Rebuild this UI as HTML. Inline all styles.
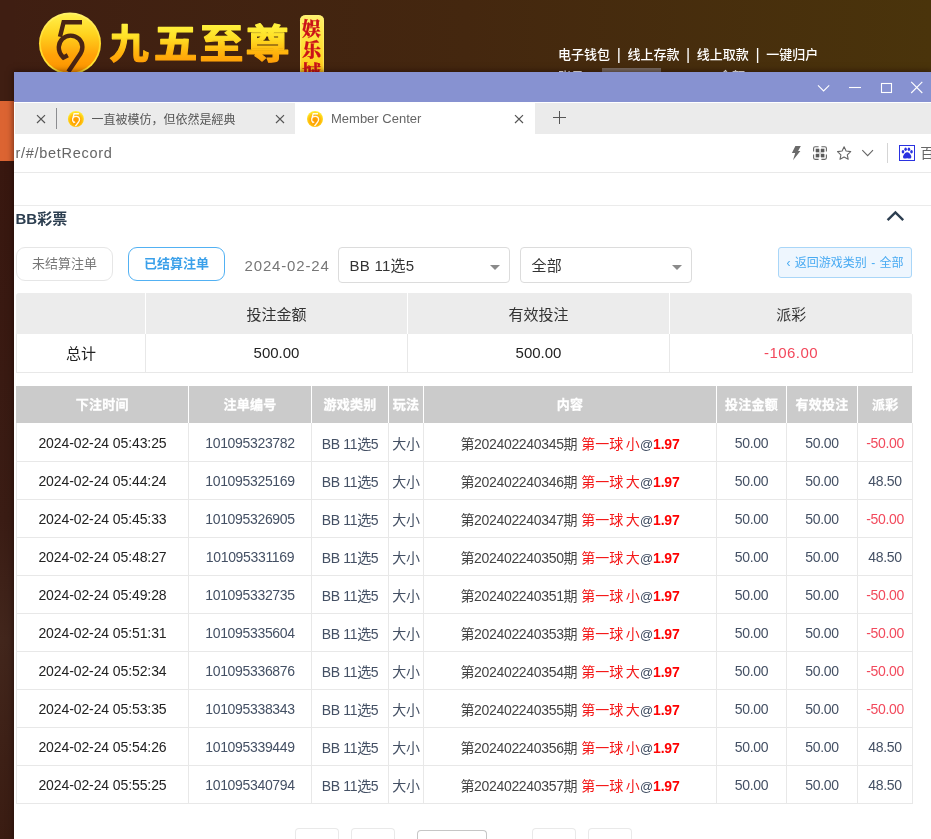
<!DOCTYPE html>
<html lang="zh-CN">
<head>
<meta charset="utf-8">
<title>Member Center</title>
<style>
*{box-sizing:border-box;margin:0;padding:0}
html,body{width:931px;height:839px;overflow:hidden}
body{position:relative;font-family:"Liberation Sans","Noto Sans CJK SC",sans-serif;font-size:14px;color:#222;
 background:linear-gradient(90deg,#3f1e12 0%,#44270f 50%,#4a340b 100%);}
#root{position:absolute;left:0;top:0;width:931px;height:839px;will-change:transform}
.abs{position:absolute}
svg{position:absolute;overflow:visible}
/* ---------- page behind ---------- */
#leftbar{left:0;top:0;width:14px;height:839px;background:linear-gradient(180deg,#3f1e12 0,#3f1e12 101px,#dc6432 101px,#dc6432 161px,#38170f 161px,#3a1c14 520px,#42261c 640px,#3a1c12 839px)}
#badge{left:299.5px;top:14.5px;width:24.5px;height:70px;border-radius:5.5px;background:linear-gradient(180deg,#fff070 0%,#ffe848 25%,#ffd829 60%,#ffbf12 85%);box-shadow:inset 0 0 1.5px 0.5px #fff27a}
#badge span{position:absolute;left:0;width:24px;text-align:center;font-family:"Noto Serif CJK SC","Liberation Serif",serif;font-weight:900;font-size:19px;line-height:20px;color:#cb1219;-webkit-text-stroke:.25px #cb1219}
#topnav{left:558px;top:45px;color:#fff;font-size:13px;line-height:20px;font-weight:500;white-space:nowrap}
#topnav i{font-style:normal;display:inline-block;width:17.4px;text-align:center;font-size:16px;line-height:16px;font-weight:400;vertical-align:-0.8px}
#topnav2{left:558px;top:67px;color:#fff;font-size:13px;line-height:20px;font-weight:500;white-space:nowrap}
#acctbox{left:602px;top:68px;width:59px;height:10px;background:#786b62}
/* ---------- window ---------- */
#win{left:14px;top:72px;width:917px;height:767px;background:#fff;box-shadow:0 0 6px 1px rgba(20,0,0,.5)}
#titlebar{left:14px;top:72px;width:917px;height:30px;background:#8792d1}
#tabbar{left:14px;top:102px;width:917px;height:32px;background:#ebebeb;border-top:1px solid #fff;border-left:1px solid #fff}
#tabactive{left:295px;top:102px;width:240px;height:32px;background:#fff}
.tabtxt{top:110px;font-size:12px;line-height:20px;color:#555;white-space:nowrap}
#tabsep{left:56px;top:108px;width:1px;height:21px;background:#8c8d90}
#addrline{left:14px;top:172px;width:917px;height:1px;background:#e9e9e9}
#url{left:15.5px;top:143px;font-size:14.5px;line-height:20px;color:#666;white-space:nowrap;letter-spacing:.7px}
#addrsep{left:887px;top:143px;width:1px;height:20px;background:#d5d5d5}
#bai{left:920.2px;top:142.5px;font-size:14px;line-height:20px;color:#666;white-space:nowrap}
#line2{left:14px;top:205px;width:917px;height:1px;background:#ebebeb}
/* ---------- content ---------- */
#ttl{left:15.5px;top:208.5px;font-size:15px;line-height:20px;font-weight:700;color:#2c3e50;white-space:nowrap}
.btn{top:247px;height:34px;border-radius:9px;font-size:13px;line-height:32px;text-align:center;white-space:nowrap}
#b1{left:16px;width:97px;border:1px solid #e6e6e6;color:#777}
#b2{left:128px;width:97px;border:1px solid #52b1f3;color:#3aa0ea;font-weight:700}
#date{left:244.5px;top:255.5px;font-size:15px;line-height:20px;color:#777;white-space:nowrap;letter-spacing:.85px}
.sel{top:247px;height:36px;width:172px;border:1px solid #dcdcdc;border-radius:4px;font-size:15px;line-height:34px;color:#333;padding-left:10.5px;padding-top:1px;letter-spacing:.25px;white-space:nowrap}
.sel:after{content:"";position:absolute;right:9px;top:16.5px;border:5px solid transparent;border-top:5px solid #8a8a8a;border-bottom:0}
#back{left:778px;top:247px;width:134px;height:31px;border:1px solid #a9d6f8;border-radius:3px;background:#eef6fe;color:#48aaf2;font-size:12px;line-height:29px;padding-top:1px;text-align:center;white-space:nowrap;word-spacing:1px}
table{position:absolute;border-collapse:collapse;table-layout:fixed}
td,th{text-align:center;white-space:nowrap;overflow:hidden;padding:0;font-weight:400}
#sumbg{left:16px;top:293px;width:896px;height:41px;background:#ececec;border-radius:3px 3px 0 0}
#mainbg{left:16px;top:386px;width:896px;height:37px;background:#cbcbcb}
#sum{left:16px;top:293px;width:896px}
#sum th{height:41px;font-size:15px;color:#333;border-left:1px solid #fff}
#sum th:first-child{border-left:0}
#sum td{height:38px;font-size:15px;color:#222;border:1px solid #e8e8e8;border-top:0}
#sum td.neg{color:#f3475b;letter-spacing:.45px}
#main{left:16px;top:386px;width:896px}
#main th{height:37px;color:#fff;font-size:13px;font-weight:700;border-left:1px solid #fff;letter-spacing:.25px;-webkit-text-stroke:.3px #fff;padding-bottom:2px}
#main th:first-child{border-left:0}
#main td{height:38px;font-size:14px;color:#445064;border:1px solid #e8e8e8;border-top:0;letter-spacing:-.33px;padding-top:2px}
#main td:first-child{color:#222;letter-spacing:-.1px}
#main td.c{letter-spacing:0;color:#444}
#main td.c u{text-decoration:none;letter-spacing:-.33px}
#main td.c b{color:#f00;letter-spacing:-.2px}
#main td.c i{font-style:normal;color:#f41a1a;word-spacing:-1.2px}
#main td.c s{text-decoration:none;color:#3d4a5f;font-size:13px}
#main td.neg{color:#f2495c}
.pg{top:828px;height:20px;border:1px solid #e9e9e9;border-bottom:0;border-radius:4px 4px 0 0;background:#fff}
</style>
</head>
<body>
<div id="root">
<div id="leftbar" class="abs"></div>

<!-- logo -->
<svg id="logo" style="left:38px;top:12px" width="64" height="64" viewBox="0 0 64 64">
  <defs>
    <linearGradient id="lg1" x1="0" y1="0" x2="0" y2="1">
      <stop offset="0" stop-color="#fff04a"/><stop offset=".35" stop-color="#ffd21e"/><stop offset=".7" stop-color="#ffa208"/><stop offset="1" stop-color="#ff9500"/>
    </linearGradient>
    <linearGradient id="lg2" x1="0" y1="0" x2="0" y2="1">
      <stop offset="0" stop-color="#fff36a"/><stop offset=".5" stop-color="#ffd92a"/><stop offset="1" stop-color="#ffe838"/>
    </linearGradient>
  </defs>
  <circle cx="32" cy="31.5" r="31" fill="url(#lg2)"/>
  <circle cx="32" cy="31.5" r="29.2" fill="url(#lg1)"/>
  <g fill="none" stroke="#4a2413" stroke-width="4.4" stroke-linejoin="miter">
    <path d="M44 10.2 H25.6 L22 24.8"/>
    <path d="M29.8 43.2 L25.4 45.6 C21.8 42 20.6 38.6 20.8 35 C21.2 28.6 26 23.6 32.6 23.6 C39.2 23.6 44.4 28.6 44.4 35 C44.4 38.6 43 41.2 41 43.8 L30.3 59.8"/>
  </g>
</svg>
<svg id="logotxt" style="left:0;top:0" width="300" height="72" viewBox="0 0 300 72">
  <defs><linearGradient id="tg" x1="0" y1="-35" x2="0" y2="5" gradientUnits="userSpaceOnUse">
    <stop offset="0" stop-color="#fff340"/><stop offset=".35" stop-color="#ffe026"/><stop offset=".7" stop-color="#ffb70e"/><stop offset="1" stop-color="#ff9c06"/>
  </linearGradient></defs>
  <g font-family="'Noto Sans CJK SC','Liberation Sans',sans-serif" font-weight="700" font-size="40" fill="url(#tg)" stroke="url(#tg)" stroke-width="1.2" stroke-linejoin="round">
    <text transform="translate(109.6,58.3) scale(0.98,1)">九</text>
    <text transform="translate(153.6,58.3) scale(1.10,1)">五</text>
    <text transform="translate(199.4,58.3) scale(1.10,1)">至</text>
    <text transform="translate(245.4,58.3) scale(1.10,1)">尊</text>
  </g>
</svg>
<div id="badge" class="abs"><span style="top:3px">娱</span><span style="top:24.3px">乐</span><span style="top:46px">城</span></div>

<div id="topnav" class="abs">电子钱包<i>|</i>线上存款<i>|</i>线上取款<i>|</i>一键归户</div>
<div id="topnav2" class="abs">账号<span style="display:inline-block;width:135px"></span>余额</div>
<div id="acctbox" class="abs"></div>

<!-- window -->
<div id="win" class="abs"></div>
<div id="titlebar" class="abs"></div>
<svg style="left:0;top:0" width="931" height="200" viewBox="0 0 931 200">
  <g fill="none" stroke="#fff" stroke-width="1.1">
    <path d="M818 85.3 L823.6 91 L829.2 85.3"/>
    <path d="M849 87.5 H861"/>
    <rect x="881.5" y="83.5" width="10" height="9"/>
    <path d="M911.2 81.8 L922.3 93 M922.3 81.8 L911.2 93"/>
  </g>
</svg>
<div id="tabbar" class="abs"></div>
<div id="tabactive" class="abs"></div>
<div id="tabsep" class="abs"></div>
<svg style="left:0;top:0" width="931" height="200" viewBox="0 0 931 200">
  <defs>
    <radialGradient id="fg" cx="0" cy="1.5" r="9" gradientUnits="userSpaceOnUse"><stop offset="0" stop-color="#ff9a00"/><stop offset=".5" stop-color="#ffa800"/><stop offset=".8" stop-color="#ffcf18"/><stop offset="1" stop-color="#ffee35"/></radialGradient>
    <g id="fav">
      <circle cx="0" cy="0" r="8" fill="url(#fg)"/>
      <g fill="none" stroke="#fff" stroke-opacity=".92" stroke-width="1.35">
        <path d="M3 -5.3 H-1.8 L-2.8 -1.6"/>
        <path d="M-0.8 2.8 L-2 3.5 C-3.4 2 -3.5 0.8 -3.3 0 C-3 -1.8 -1.6 -2.6 0.2 -2.6 C2.2 -2.6 3.6 -1.2 3.6 0.6 C3.6 1.8 3.1 2.6 2.5 3.3 L-0.5 7.2"/>
      </g>
    </g>
  </defs>
  <g fill="none" stroke="#555" stroke-width="1.2">
    <path d="M37 115.1 L45 123 M45 115.1 L37 123"/>
    <path d="M276 115.1 L284 123 M284 115.1 L276 123"/>
    <path d="M515 115.1 L523 123 M523 115.1 L515 123"/>
    <path d="M553 117.5 H566 M559.5 111 V124" stroke-width="1"/>
  </g>
  <use href="#fav" x="75.9" y="119"/>
  <use href="#fav" x="315" y="119"/>
  <!-- address bar icons -->
  <path d="M795.4 146 L800.8 146 L798.1 150.9 L800.4 150.9 L793 160.3 L795.2 153 L791.9 153 Z" fill="#6a6a6a"/>
  <g fill="none" stroke="#666" stroke-width="1.1">
    <path d="M818.6 146.7 H815.2 Q813.6 146.7 813.6 148.3 V151.6 M821.4 146.7 H824.8 Q826.4 146.7 826.4 148.3 V151.6 M813.6 154.5 V157.8 Q813.6 159.4 815.2 159.4 H818.6 M826.4 154.5 V157.8 Q826.4 159.4 824.8 159.4 H821.4"/>
    <path d="M844.1 146.8 L846.1 151 L850.7 151.6 L847.3 154.8 L848.2 159.3 L844.1 157.1 L840 159.3 L840.9 154.8 L837.5 151.6 L842.1 151 Z" stroke-linejoin="round"/>
    <path d="M862.3 150.2 L867.65 155.7 L873 150.2"/>
  </g>
  <rect x="816" y="149" width="8" height="8" fill="#d8d8d8"/><g fill="#5a5a5a"><rect x="815.7" y="148.7" width="3.4" height="3.4"/><rect x="821" y="148.7" width="3.4" height="3.4"/><rect x="815.7" y="154" width="3.4" height="3.4"/><rect x="821" y="154" width="3.4" height="3.4"/></g>
  <rect x="899.5" y="145.5" width="15" height="15" fill="#fff" stroke="#2a32e0" stroke-width="1"/>
  <g fill="#2a32e0">
    <ellipse cx="903" cy="151.8" rx="1.3" ry="1.7"/><ellipse cx="905.6" cy="149.3" rx="1.3" ry="1.8"/><ellipse cx="908.9" cy="149.3" rx="1.3" ry="1.8"/><ellipse cx="911.5" cy="151.8" rx="1.3" ry="1.7"/>
    <path d="M907.2 152.2 C909 152.2 910 154 911 155.4 C912 157 911 158.8 909.3 158.6 C908.3 158.5 907.9 158.2 907.2 158.2 C906.5 158.2 906.1 158.5 905.1 158.6 C903.4 158.8 902.4 157 903.4 155.4 C904.4 154 905.4 152.2 907.2 152.2 Z"/>
  </g>
</svg>
<div class="abs tabtxt" style="left:91.5px">一直被模仿，但依然是經典</div>
<div class="abs tabtxt" style="left:331px;top:109px;font-size:13px;color:#666">Member Center</div>
<div id="url" class="abs">r/#/betRecord</div>
<div id="addrline" class="abs"></div>
<div id="addrsep" class="abs"></div>
<div id="bai" class="abs">百度</div>
<div id="line2" class="abs"></div>

<!-- content -->
<div id="ttl" class="abs">BB彩票</div>
<svg style="left:886px;top:210px" width="20" height="12" viewBox="0 0 20 12"><path d="M1.6 10.2 L9.4 2.4 L17.2 10.2" fill="none" stroke="#2c3e50" stroke-width="2.4"/></svg>
<div id="b1" class="abs btn">未结算注单</div>
<div id="b2" class="abs btn">已结算注单</div>
<div id="date" class="abs">2024-02-24</div>
<div class="abs sel" style="left:338px">BB 11选5</div>
<div class="abs sel" style="left:520px">全部</div>
<div id="back" class="abs">‹ 返回游戏类别 - 全部</div>

<div id="sumbg" class="abs"></div>
<div id="mainbg" class="abs"></div>
<table id="sum">
<colgroup><col style="width:129px"><col style="width:262px"><col style="width:262px"><col style="width:243px"></colgroup>
<tr><th></th><th>投注金额</th><th>有效投注</th><th>派彩</th></tr>
<tr><td>总计</td><td>500.00</td><td>500.00</td><td class="neg">-106.00</td></tr>
</table>

<table id="main">
<colgroup><col style="width:172px"><col style="width:123px"><col style="width:77px"><col style="width:35px"><col style="width:293px"><col style="width:70px"><col style="width:71px"><col style="width:55px"></colgroup>
<tr><th>下注时间</th><th>注单编号</th><th>游戏类别</th><th>玩法</th><th>内容</th><th>投注金额</th><th>有效投注</th><th>派彩</th></tr>
<tr><td>2024-02-24 05:43:25</td><td>101095323782</td><td>BB 11选5</td><td>大小</td><td class="c"><u>第202402240345期</u> <i>第一球 小</i><s>@</s><b>1.97</b></td><td>50.00</td><td>50.00</td><td class="neg">-50.00</td></tr>
<tr><td>2024-02-24 05:44:24</td><td>101095325169</td><td>BB 11选5</td><td>大小</td><td class="c"><u>第202402240346期</u> <i>第一球 大</i><s>@</s><b>1.97</b></td><td>50.00</td><td>50.00</td><td>48.50</td></tr>
<tr><td>2024-02-24 05:45:33</td><td>101095326905</td><td>BB 11选5</td><td>大小</td><td class="c"><u>第202402240347期</u> <i>第一球 大</i><s>@</s><b>1.97</b></td><td>50.00</td><td>50.00</td><td class="neg">-50.00</td></tr>
<tr><td>2024-02-24 05:48:27</td><td>101095331169</td><td>BB 11选5</td><td>大小</td><td class="c"><u>第202402240350期</u> <i>第一球 大</i><s>@</s><b>1.97</b></td><td>50.00</td><td>50.00</td><td>48.50</td></tr>
<tr><td>2024-02-24 05:49:28</td><td>101095332735</td><td>BB 11选5</td><td>大小</td><td class="c"><u>第202402240351期</u> <i>第一球 小</i><s>@</s><b>1.97</b></td><td>50.00</td><td>50.00</td><td class="neg">-50.00</td></tr>
<tr><td>2024-02-24 05:51:31</td><td>101095335604</td><td>BB 11选5</td><td>大小</td><td class="c"><u>第202402240353期</u> <i>第一球 小</i><s>@</s><b>1.97</b></td><td>50.00</td><td>50.00</td><td class="neg">-50.00</td></tr>
<tr><td>2024-02-24 05:52:34</td><td>101095336876</td><td>BB 11选5</td><td>大小</td><td class="c"><u>第202402240354期</u> <i>第一球 大</i><s>@</s><b>1.97</b></td><td>50.00</td><td>50.00</td><td class="neg">-50.00</td></tr>
<tr><td>2024-02-24 05:53:35</td><td>101095338343</td><td>BB 11选5</td><td>大小</td><td class="c"><u>第202402240355期</u> <i>第一球 大</i><s>@</s><b>1.97</b></td><td>50.00</td><td>50.00</td><td class="neg">-50.00</td></tr>
<tr><td>2024-02-24 05:54:26</td><td>101095339449</td><td>BB 11选5</td><td>大小</td><td class="c"><u>第202402240356期</u> <i>第一球 小</i><s>@</s><b>1.97</b></td><td>50.00</td><td>50.00</td><td>48.50</td></tr>
<tr><td>2024-02-24 05:55:25</td><td>101095340794</td><td>BB 11选5</td><td>大小</td><td class="c"><u>第202402240357期</u> <i>第一球 小</i><s>@</s><b>1.97</b></td><td>50.00</td><td>50.00</td><td>48.50</td></tr>
</table>

<div class="abs pg" style="left:295px;width:44px"></div>
<div class="abs pg" style="left:351px;width:44px"></div>
<div class="abs pg" style="left:417px;top:830px;width:70px;border-color:#c6c6c6"></div>
<div class="abs pg" style="left:532px;width:44px"></div>
<div class="abs pg" style="left:588px;width:44px"></div>
</div>
</body>
</html>
